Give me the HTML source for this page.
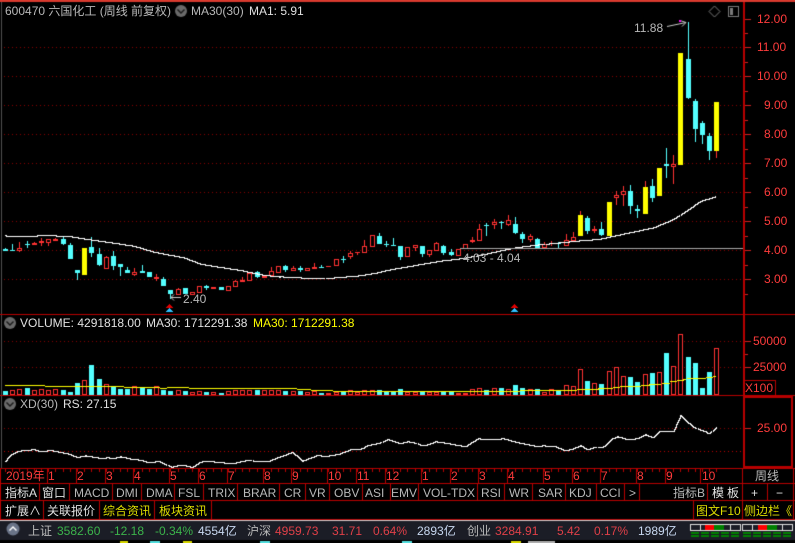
<!DOCTYPE html>
<html><head><meta charset="utf-8"><style>
html,body{margin:0;padding:0;background:#000;width:795px;height:543px;overflow:hidden}
#c{position:absolute;left:0;top:0}
.t{position:absolute;font:12px/14px "Liberation Sans","Noto Sans CJK SC",sans-serif;white-space:nowrap;color:#b8b8b8}
.w{color:#e0e0e0}.r{color:#ff3c3c}.y{color:#dcdc00}.yy{color:#ffff00}.g{color:#3cb44b}.d{color:#e04048}.b{color:#c8d8f0}
</style></head><body>
<canvas id="c" width="795" height="543"></canvas>
<span class="t" style="left:5px;top:4px">600470 六国化工 (周线 前复权)</span>
<span class="t" style="left:191px;top:4px">MA30(30)</span>
<span class="t w" style="left:249px;top:4px">MA1: 5.91</span>
<span class="t" style="left:634px;top:21px">11.88</span>
<span class="t" style="left:183px;top:292px">2.40</span>
<span class="t" style="left:463px;top:251px">4.03 - 4.04</span>
<span class="t r" style="left:757px;top:12px">12.00</span>
<span class="t r" style="left:757px;top:40px">11.00</span>
<span class="t r" style="left:757px;top:69px">10.00</span>
<span class="t r" style="left:764px;top:98px">9.00</span>
<span class="t r" style="left:764px;top:127px">8.00</span>
<span class="t r" style="left:764px;top:156px">7.00</span>
<span class="t r" style="left:764px;top:185px">6.00</span>
<span class="t r" style="left:764px;top:214px">5.00</span>
<span class="t r" style="left:764px;top:243px">4.00</span>
<span class="t r" style="left:764px;top:272px">3.00</span>
<span class="t w" style="left:20px;top:316px">VOLUME: 4291818.00</span>
<span class="t w" style="left:146px;top:316px">MA30: 1712291.38</span>
<span class="t yy" style="left:253px;top:316px">MA30: 1712291.38</span>
<span class="t r" style="left:753px;top:334px">50000</span>
<span class="t r" style="left:753px;top:360px">25000</span>
<span class="t r" style="left:745px;top:381px">X100</span>
<span class="t" style="left:20px;top:397px">XD(30)</span>
<span class="t w" style="left:63px;top:397px">RS: 27.15</span>
<span class="t r" style="left:757px;top:421px">25.00</span>
<span class="t r" style="left:6px;top:469px">2019年</span>
<span class="t r" style="left:48px;top:469px">1</span><span class="t r" style="left:77px;top:469px">2</span><span class="t r" style="left:106px;top:469px">3</span><span class="t r" style="left:134px;top:469px">4</span><span class="t r" style="left:170px;top:469px">5</span><span class="t r" style="left:199px;top:469px">6</span><span class="t r" style="left:228px;top:469px">7</span><span class="t r" style="left:264px;top:469px">8</span><span class="t r" style="left:292px;top:469px">9</span><span class="t r" style="left:328px;top:469px">10</span><span class="t r" style="left:357px;top:469px">11</span><span class="t r" style="left:386px;top:469px">12</span><span class="t r" style="left:422px;top:469px">1</span><span class="t r" style="left:451px;top:469px">2</span><span class="t r" style="left:479px;top:469px">3</span><span class="t r" style="left:508px;top:469px">4</span><span class="t r" style="left:544px;top:469px">5</span><span class="t r" style="left:573px;top:469px">6</span><span class="t r" style="left:601px;top:469px">7</span><span class="t r" style="left:637px;top:469px">8</span><span class="t r" style="left:666px;top:469px">9</span><span class="t r" style="left:702px;top:469px">10</span>
<span class="t" style="left:755px;top:469px">周线</span>
<span class="t w" style="left:5px;top:486px">指标A</span>
<span class="t w" style="left:42px;top:486px">窗口</span>
<span class="t" style="left:74px;top:486px">MACD</span>
<span class="t" style="left:116px;top:486px">DMI</span>
<span class="t" style="left:146px;top:486px">DMA</span>
<span class="t" style="left:178px;top:486px">FSL</span>
<span class="t" style="left:208px;top:486px">TRIX</span>
<span class="t" style="left:243px;top:486px">BRAR</span>
<span class="t" style="left:284px;top:486px">CR</span>
<span class="t" style="left:309px;top:486px">VR</span>
<span class="t" style="left:334px;top:486px">OBV</span>
<span class="t" style="left:365px;top:486px">ASI</span>
<span class="t" style="left:391px;top:486px">EMV</span>
<span class="t" style="left:423px;top:486px">VOL-TDX</span>
<span class="t" style="left:481px;top:486px">RSI</span>
<span class="t" style="left:509px;top:486px">WR</span>
<span class="t" style="left:538px;top:486px">SAR</span>
<span class="t" style="left:569px;top:486px">KDJ</span>
<span class="t" style="left:600px;top:486px">CCI</span>
<span class="t" style="left:629px;top:486px">&gt;</span>
<span class="t" style="left:673px;top:486px">指标B</span>
<span class="t w" style="left:712px;top:486px;letter-spacing:3px">模板</span>
<span class="t w" style="left:751px;top:486px">+</span>
<span class="t w" style="left:776px;top:486px">−</span>
<span class="t w" style="left:5px;top:504px">扩展∧</span>
<span class="t w" style="left:47px;top:504px">关联报价</span>
<span class="t y" style="left:103px;top:504px">综合资讯</span>
<span class="t y" style="left:159px;top:504px">板块资讯</span>
<span class="t y" style="left:696px;top:504px">图文F10</span>
<span class="t y" style="left:744px;top:504px">侧边栏《</span>
<span class="t" style="left:28px;top:524px">上证</span>
<span class="t g" style="left:57px;top:524px">3582.60</span>
<span class="t g" style="left:110px;top:524px">-12.18</span>
<span class="t g" style="left:155px;top:524px">-0.34%</span>
<span class="t b" style="left:198px;top:524px">4554亿</span>
<span class="t" style="left:247px;top:524px">沪深</span>
<span class="t d" style="left:275px;top:524px">4959.73</span>
<span class="t d" style="left:332px;top:524px">31.71</span>
<span class="t d" style="left:373px;top:524px">0.64%</span>
<span class="t b" style="left:417px;top:524px">2893亿</span>
<span class="t" style="left:467px;top:524px">创业</span>
<span class="t d" style="left:495px;top:524px">3284.91</span>
<span class="t d" style="left:557px;top:524px">5.42</span>
<span class="t d" style="left:594px;top:524px">0.17%</span>
<span class="t b" style="left:638px;top:524px">1989亿</span>
<script>
var x=document.getElementById('c').getContext('2d');
function R(c,a,b,w,h){x.fillStyle=c;x.fillRect(a,b,w,h)}
var CY='#54ffff',RD='#ff3232',YE='#ffff00',AX='#b80000',GR='#8c0000';
function dots(y,c){for(var i=4;i<743;i+=4)R(c||GR,i,y,1,1)}
[47,76,105,134,163,192,221,250,279,341,367,428].forEach(function(y){dots(y)});
dots(451,'#c00000');
function px(i){return Math.floor(5.6+i*7.185)}
var C=[
[220,'c',88,92,84,92],[220,'c',90,92,72,92],[220,'h',85,92,66,95],[220,'c',71,73,64,83],[220,'r',70,74,67,76],[220,'r',64,68,55,77],[220,'h',58,68,58,77],[220,'r',58,62,55,64],[220,'c',57,72,50,74],[220,'c',76,117,70,117],
[220,'c',151,158,151,180],[220,'y',84,165,84,165],[220,'c',81,99,52,110],[220,'c',102,135,85,138],[220,'h',111,147,108,147],[220,'c',108,138,93,150],[220,'c',132,140,132,168],[220,'c',150,159,141,159],[220,'h',156,165,145,167],[220,'c',153,158,135,158],
[220,'c',156,171,156,171],[220,'r',172,176,162,184],[220,'c',177,198,171,198],[220,'c',210,222,210,236],[220,'h',207,225,204,225],[220,'c',204,222,204,222],[220,'h',217,225,217,225],[220,'h',198,219,198,219],[220,'c',199,203,195,210],[220,'r',202,206,202,206],
[220,'c',201,209,201,209],[220,'h',198,212,198,212],[220,'h',183,200,180,200],[220,'r',180,185,170,186],[220,'h',158,182,155,182],[220,'c',156,171,153,174],[220,'r',168,173,168,173],[220,'h',153,167,141,167],[220,'h',138,159,138,159],
[210,'c',168,180,165,186],[210,'h',174,182,168,183],[210,'c',174,181,168,186],[210,'h',175,182,175,182],[210,'r',171,176,159,177],[210,'c',171,173,165,174],[210,'r',168,170,168,170],[210,'h',148,167,148,167],[210,'c',148,150,138,159],[210,'h',130,141,123,147],[210,'r',126,130,126,135],
[210,'h',108,128,90,128],[210,'h',76,110,76,110],[210,'c',78,102,69,102],[210,'c',101,103,93,111],[210,'c',105,107,84,107],[210,'c',108,141,108,150],[210,'h',112,141,112,141],[210,'h',106,113,106,122],[210,'c',108,132,108,141],[210,'h',121,135,121,141],
[210,'h',100,123,96,123],[210,'c',108,129,104,135],[210,'c',126,135,117,138],[210,'h',118,137,118,137],[210,'h',103,116,103,116],[210,'r',90,96,81,99],[210,'h',57,93,42,93],[210,'c',44,47,39,78],[210,'h',36,45,27,57],[210,'c',37,39,33,57],
[210,'h',30,45,15,48],[210,'c',42,69,21,72],[210,'c',72,87,66,99],[210,'h',78,90,72,96],[210,'c',87,114,84,117],[210,'h',102,115,96,115],[210,'r',99,102,93,108],[210,'c',98,102,96,114],[210,'h',91,109,72,109],[210,'h',81,92,66,92],
[0,'y',645,708,633,708],[0,'c',654,692,648,702],[0,'r',688,692,678,700],[0,'c',687,705,666,708],[0,'y',606,708,606,708],[0,'h',585,594,573,615],[0,'h',574,584,558,618],[0,'c',573,618,555,642],[0,'c',627,633,615,654],[0,'y',561,642,543,642],
[0,'c',558,594,537,606],[0,'y',504,588,504,588],[0,'c',492,497,444,534],[0,'h',492,500,465,552],[0,'y',159,495,159,495],[0,'c',177,294,66,297],[0,'c',303,387,297,426],[0,'c',369,405,363,432],[0,'c',408,453,399,480],[0,'y',306,453,306,474]];
C.forEach(function(d,i){var o=d[0],t=d[1],X=px(i);
 function Y(v){return Math.round(o+v/3)}
 var bt=Y(d[2]),bb=Y(d[3]),wt=Y(d[4]),wb=Y(d[5]);
 var col=t=='c'?CY:(t=='y'?YE:RD);
 R(t=='y'?RD:col,X,wt,1,wb-wt);
 if(t=='h'){R(RD,X-2,bt,5,bb-bt);R('#000',X-1,bt+1,3,Math.max(0,bb-bt-2));}
 else R(col,X-2,bt,5,Math.max(1,bb-bt));
});
function P(pts,c){for(var k=0;k<pts.length-1;k++){var a=pts[k],b=pts[k+1];var n=Math.max(1,Math.round(b[0]-a[0]));var py=null;for(var s=0;s<=n;s++){var xx=Math.round(a[0]+(b[0]-a[0])*s/n),yy=Math.round(a[1]+(b[1]-a[1])*s/n);var top=py===null?yy:Math.min(py,yy),hh=py===null?1:Math.abs(py-yy)+1;R(c,xx,top,1,hh);py=yy}}}
function Z(ox,oy,a){var o=[];for(var i=0;i<a.length;i+=2)o.push([ox+a[i]/3,oy+a[i+1]/3]);return o}
var ma=Z(0,220,[15,46,27,48,135,46,200,47,222,51,260,57,330,67,400,77,460,95,550,112,600,131,660,141,720,150,780,163,840,170]);
ma=ma.concat(Z(280,210,[0,199,50,202,115,205,155,203,200,199,240,196,290,187,330,178,400,166,480,152,550,144,620,130,700,113,760,105,830,98,900,91]));
ma=ma.concat(Z(560,0,[115,717,280,682,340,657,380,630,420,603,465,589]));
P(ma,'#ffffff');
R('#a8a8a8',460,248,283,1);
x.strokeStyle='#c8c8c8';x.lineWidth=1;x.beginPath();x.moveTo(667,26.5);x.lineTo(686,22.5);x.moveTo(680,20.5);x.lineTo(686,22.5);x.lineTo(682,26.5);x.moveTo(181,297.5);x.lineTo(171,297.5);x.moveTo(174,294.5);x.lineTo(171,297.5);x.lineTo(174,300.5);x.stroke();
R('#ff00ff',679,20,2,2);
function mk(a){R('#e00000',a,304,1,1);R('#e00000',a-1,305,3,1);R('#e00000',a-2,306,5,1);R('#e00000',a-3,307,7,1);R('#30c0ff',a,308,1,1);R('#30c0ff',a-1,309,3,1);R('#30c0ff',a-2,310,5,1);R('#30c0ff',a-3,311,7,1)}
mk(169);mk(514);
var V=[243,240,238,234,241,238,240,238,240,246,219,210,165,207,223,231,237,237,229,232,237,229,239,243,240,243,247,244,246,247,249,244,241,241,241,240,241,241,241,243,244,243,247,244,249,250,246,245,241,246,241,241,240,245,245,237,246,246,244,246,245,244,244,250,250,238,235,240,235,234,238,225,234,238,237,247,238,241,226,229,178,213,220,222,184,172,199,201,216,192,189,187,129,168,73,141,159,234,186,115];
var VC=[0,3,8,9,10,12,13,15,16,17,19,20,22,23,25,28,30,35,39,41,44,47,52,53,54,55,58,61,62,67,69,71,72,74,77,81,83,87,88,90,92,95,96,97,98];
V.forEach(function(v,i){var X=px(i),top=Math.round(310+v/3),bot=395;
 if(VC.indexOf(i)>=0)R(CY,X-2,top,5,bot-top);
 else if(i==63||i==64||i==45)R(RD,X-2,top,5,bot-top);
 else{R(RD,X-2,top,5,bot-top);R('#000',X-1,top+1,3,Math.max(0,bot-top-2))}
});
[[15,135,226],[135,372,229],[372,480,232],[480,500,235],[500,567,232],[567,890,235],[890,933,238],[933,1000,241],[1000,1200,244]].forEach(function(s){R(YE,Math.round(s[0]/3),Math.round(310+s[2]/3),Math.round((s[1]-s[0])/3),1)});
[[0,360,244],[360,530,241],[530,595,238],[595,640,235],[640,660,232],[660,722,229],[722,748,226],[748,785,223],[785,810,218],[810,830,214],[830,850,211],[850,860,207],[860,918,205],[918,940,202],[940,948,199]].forEach(function(s){R(YE,Math.round(400+s[0]/3),Math.round(310+s[2]/3),Math.round((s[1]-s[0])/3),1)});
var xd=Z(0,395,[14,197,30,180,55,167,85,165,100,162,120,169,150,165,180,171,200,175,230,186,255,181,300,189,320,187,340,189,360,184,395,192,420,194,445,202,475,198,490,205,512,216,530,211,555,211,575,216,600,200,620,197,660,202,700,204,745,194,770,199,800,199,840,184,875,171,905,197,950,180,975,183,1015,177,1050,163,1085,160,1100,150,1135,144,1160,132,1200,145]);
xd=xd.concat(Z(400,395,[20,139,40,142,65,151,85,148,105,139,130,142,195,154,215,140,235,130,255,133,310,130,345,140,410,154,430,151,465,154,495,166,520,160,540,151,562,163,580,157,605,157,635,130,650,124,685,133,715,129,735,118,755,127,778,109,820,109,840,61,880,96,905,106,928,115,947,96]));
P(xd,'#ffffff');
R('#d83a2e',0,0,795,2);
R('#505050',1,2,1,466);
R(AX,743,2,2,466);
R(AX,0,314,795,1);
R(AX,0,395,795,1);R(AX,745,396,48,2);R(AX,745,466,48,2);R(AX,791,396,2,72);
R(AX,743,380,33,1);R(AX,775,380,1,15);
[19,47,76,105,134,163,192,221,250,279].forEach(function(y){R('#d02020',745,y,6,1);});
for(var y=33;y<300;y+=29)R('#d02020',745,y,3,1);
R('#d02020',745,341,6,1);R('#d02020',745,367,6,1);R('#d02020',745,354,3,1);R('#d02020',745,428,6,1);
R(AX,0,468,795,1);R(AX,0,483,795,1);R(AX,0,500,795,1);R(AX,0,519,795,1);R('#d0d0d0',0,520,795,1);
[0,47,76,105,133,169,198,227,263,291,327,356,385,421,450,478,507,543,572,600,636,665,700,742,793].forEach(function(a){R(AX,a,469,1,14)});
for(var i=0;i<100;i++)R(AX,px(i),469,1,3);
[0,39,69,112,141,174,203,237,279,305,329,362,390,418,477,504,532,565,596,624,639,707,742,767,793].forEach(function(a){R(AX,a,484,1,16)});
[0,43,99,154,211,693,742,793].forEach(function(a){R(AX,a,501,1,18)});
R('#1b1d26',0,521,795,19);
[[120,128,'#d8d800'],[150,160,'#54e0e0'],[183,192,'#d8d800'],[260,270,'#54e0e0'],[402,412,'#54e0e0'],[511,521,'#d8d800'],[528,555,'#b0b0b0']].forEach(function(s){R(s[2],s[0],541,s[1]-s[0],2)});
function gauge(a,r1,r2,g2){x.strokeStyle='#e0e0e0';x.lineWidth=1;for(var i=0;i<5;i++)x.strokeRect(a+i*10+.5,524.5,10,6);R('#ff0000',r1,525,r2-r1,5);R('#008000',r2,525,g2-r2,5);for(var i=0;i<5;i++){R('#008000',a+1+i*10,532,8,2);R('#008000',a+1+i*10,535,8,2)}}
gauge(690,705,714,724);gauge(742,758,767,777);
function circ(a,b,r,up){x.fillStyle=up?'#6a7488':'#6a6a6a';x.beginPath();x.arc(a,b,r,0,7);x.fill();x.lineWidth=1.4;x.beginPath();if(up){x.strokeStyle='#ffffff';x.moveTo(a-3.5,b+1.5);x.lineTo(a,b-2);x.lineTo(a+3.5,b+1.5)}else{x.strokeStyle='#1a1a1a';x.moveTo(a-3.5,b-1.5);x.lineTo(a,b+2);x.lineTo(a+3.5,b-1.5)}x.stroke()}
circ(181,11,6);circ(10,323,6);circ(10,404,6);circ(13,529,6.5,true);
x.strokeStyle='#7a7a7a';x.lineWidth=1;x.beginPath();x.moveTo(714.5,6);x.lineTo(720,11.5);x.lineTo(714.5,17);x.lineTo(709,11.5);x.closePath();x.stroke();
x.strokeRect(728.5,6.5,10,10);R('#7a7a7a',730,8,3,7);
</script>
</body></html>
